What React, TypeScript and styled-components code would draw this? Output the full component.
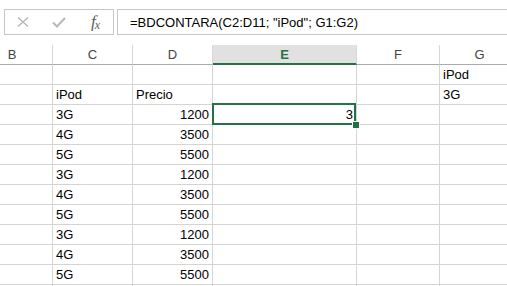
import React from 'react';
import styled, { createGlobalStyle, css } from 'styled-components';

const GlobalStyle = createGlobalStyle`
    html, body {
        margin: 0;
        padding: 0;
        background: #FFFFFF;
        overflow: hidden;
    }
    body {
        font-family: "Liberation Sans", Arial, sans-serif;
    }
`;

const Page = styled.div`
    width: 507px;
    height: 286px;
    overflow: hidden;
    background: #FFFFFF;
`;

const FormulaBar = styled.div`
    display: flex;
    gap: 3px;
    height: 45px;
    padding: 9px 0 0 4px;
    box-sizing: border-box;
`;

const IconBox = styled.div`
    display: flex;
    width: 110px;
    height: 26px;
    box-sizing: border-box;
    border: 1px solid #C6C6C6;
`;

const IconSlot = styled.div`
    width: 36px;
    display: flex;
    align-items: center;
    justify-content: center;
    color: #606060;
`;

const FxText = styled.span`
    font-family: "Liberation Serif", "Times New Roman", serif;
    font-style: italic;
    font-size: 17px;
    line-height: 1;
    margin-top: -2px;
    letter-spacing: -1px;

    small {
        font-size: 12px;
        position: relative;
        top: 2px;
    }
`;

const FormulaInput = styled.div`
    flex: 1;
    height: 26px;
    box-sizing: border-box;
    border: 1px solid #C6C6C6;
    border-right: none;
    padding: 2px 0 0 12px;
    font-size: 13px;
    line-height: 22px;
    color: #000000;
    white-space: nowrap;
`;

const Sheet = styled.div`
    width: 507px;
    overflow: hidden;
`;

const Grid = styled.div`
    display: grid;
    grid-template-columns: 81px 80px 80px 144px 83px 80px;
    grid-auto-rows: 20px;
    margin-left: -28px;
    width: max-content;
`;

const HeaderCell = styled.div<{ $active?: boolean }>`
    box-sizing: border-box;
    border-right: 1px solid #D8D8D8;
    border-bottom: 1px solid #ABABAB;
    text-align: center;
    font-size: 13px;
    line-height: 19px;
    color: #444444;

    ${({ $active }) => $active && css`
        background: #E1E1E1;
        border-bottom: 2px solid #217346;
        color: #217346;
        font-weight: 700;
    `}
`;

const Cell = styled.div<{ $align?: 'left' | 'right'; $selected?: boolean }>`
    position: relative;
    box-sizing: border-box;
    border-right: 1px solid #D4D4D4;
    border-bottom: 1px solid #D4D4D4;
    padding: 0 3px 0 3px;
    font-size: 13px;
    line-height: 20px;
    color: #000000;
    white-space: nowrap;
    text-align: ${({ $align }) => $align ?? 'left'};

    ${({ $selected }) => $selected && css`
        z-index: 1;
        &::before {
            content: '';
            position: absolute;
            top: -2px;
            left: -1px;
            right: 0;
            bottom: -1px;
            border: 2px solid #217346;
            pointer-events: none;
        }
        &::after {
            content: '';
            position: absolute;
            right: -3px;
            bottom: -4px;
            width: 6px;
            height: 6px;
            background: #217346;
            box-shadow: 0 0 0 1px #FFFFFF;
        }
    `}
`;

const columns = ['B', 'C', 'D', 'E', 'F', 'G'];

type Row = { c?: string; d?: string; e?: string; g?: string };

const models = ['3G', '4G', '5G'];
const prices: Record<string, string> = { '3G': '1200', '4G': '3500', '5G': '5500' };

const rows: Row[] = [
    { g: 'iPod' },
    { c: 'iPod', d: 'Precio', g: '3G' },
    ...Array.from({ length: 9 }, (_, i) => {
        const m = models[i % 3];
        return { c: m, d: prices[m], e: i === 0 ? '3' : undefined };
    }),
    {},
];

const App: React.FC = () => {
    return (
        <Page>
            <GlobalStyle />
            <FormulaBar>
                <IconBox>
                    <IconSlot>
                        <svg width="12" height="12" viewBox="0 0 12 12">
                            <path d="M1 1.5 L11 10.5 M11 1.5 L1 10.5" stroke="#B4B4B4" strokeWidth="1.3" fill="none" />
                        </svg>
                    </IconSlot>
                    <IconSlot>
                        <svg width="14" height="11" viewBox="0 0 14 11">
                            <path d="M1 5.5 L5 9.5 L13 1" stroke="#B8B8B8" strokeWidth="2" fill="none" />
                        </svg>
                    </IconSlot>
                    <IconSlot>
                        <FxText>f<small>x</small></FxText>
                    </IconSlot>
                </IconBox>
                <FormulaInput>=BDCONTARA(C2:D11; "iPod"; G1:G2)</FormulaInput>
            </FormulaBar>
            <Sheet>
                <Grid>
                    {columns.map((col) => (
                        <HeaderCell key={col} $active={col === 'E'}>{col}</HeaderCell>
                    ))}
                    {rows.map((row, r) => (
                        <React.Fragment key={r}>
                            <Cell />
                            <Cell>{row.c}</Cell>
                            <Cell $align={r > 1 ? 'right' : 'left'}>{row.d}</Cell>
                            <Cell $align="right" $selected={r === 2}>{row.e}</Cell>
                            <Cell />
                            <Cell>{row.g}</Cell>
                        </React.Fragment>
                    ))}
                </Grid>
            </Sheet>
        </Page>
    );
};

export default App;
